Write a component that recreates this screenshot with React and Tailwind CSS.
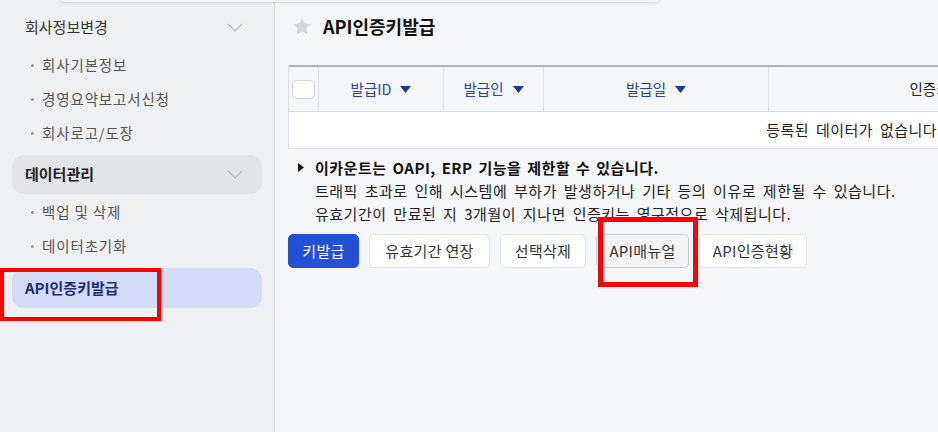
import React from "react";

const font = { fontFamily: '"Noto Sans CJK KR", "Noto Sans", sans-serif' };

function Chevron() {
  return (
    <svg width="16" height="9" viewBox="0 0 16 9" fill="none" className="shrink-0">
      <path d="M1 1l7 7 7-7" stroke="#b9bdc3" strokeWidth="1.2" />
    </svg>
  );
}

function SubItem({ children }) {
  return (
    <div className="flex h-[34px] items-center pl-[19px] text-[14.5px] tracking-[0.06em] text-[#555]">
      <span className="mr-[8px] h-[3px] w-[3px] rounded-full bg-[#999]" />
      <span>{children}</span>
    </div>
  );
}

function Tri() {
  return (
    <svg width="11" height="7" viewBox="0 0 11 7" className="ml-[9px] inline-block">
      <path d="M0 0h11L5.5 7z" fill="#1e3a8a" />
    </svg>
  );
}

function Btn({ children, className = "" }) {
  return (
    <button
      className={
        "flex h-[34px] items-center justify-center rounded-[5px] border px-[8px] text-[15px] tracking-[0.3px] " +
        className
      }
    >
      {children}
    </button>
  );
}

export default function App() {
  return (
    <div style={font} className="relative flex h-[432px] w-[938px] overflow-hidden bg-[#f5f6f8]">
      {/* top shadow */}
      <div className="absolute left-[60px] top-[-10px] z-10 h-[12px] w-[600px] rounded-b-[4px] bg-[#f3f4f6] shadow-[0_1px_3px_rgba(0,0,0,0.12)]" />

      {/* sidebar */}
      <aside className="relative flex w-[275px] shrink-0 flex-col border-r border-[#d9dadd] bg-[#eff0f2] px-[12px] pt-[8px]">
        <div className="flex h-[38px] items-center justify-between pl-[13px] pr-[19px] text-[15px] text-[#333]">
          <span>회사정보변경</span>
          <Chevron />
        </div>
        <div className="mt-[2px]">
          <SubItem>회사기본정보</SubItem>
          <SubItem>경영요약보고서신청</SubItem>
          <SubItem>회사로고/도장</SubItem>
        </div>
        <div className="mt-[5px] flex h-[39px] items-center justify-between rounded-[12px] bg-[#e2e4e7] pl-[13px] pr-[19px] text-[15px] font-bold text-[#222]">
          <span>데이터관리</span>
          <Chevron />
        </div>
        <div className="mt-[1px]">
          <SubItem>백업 및 삭제</SubItem>
          <SubItem>데이터초기화</SubItem>
        </div>
        <div className="mt-[5px] flex h-[40px] items-center rounded-[12px] bg-[#d3dbf6] pl-[13px] text-[15px] font-bold text-[#1e2f78]">
          API인증키발급
        </div>
        <div className="absolute left-0 top-[268px] h-[53px] w-[161px] border-[4px] border-[#ff0000]" />
      </aside>

      {/* main */}
      <main className="relative min-w-0 flex-1 pl-[13px]">
        <div className="flex h-[52px] items-center pl-[4px]">
          <svg width="20" height="19" viewBox="0 0 24 23" className="mr-[11px]">
            <path
              d="M12 1l3.1 7 7.6.7-5.7 5 1.7 7.4L12 17.2 5.3 21.1 7 13.7l-5.7-5L8.9 8z"
              fill="#d3d6db"
            />
          </svg>
          <span className="text-[18px] font-bold text-[#111]">API인증키발급</span>
        </div>

        <div className="mt-[13px] w-[1132px] border-x border-[#dcdfe3]">
          <div className="flex h-[47px] border-t-2 border-[#a6b4c4] border-b border-b-[#dcdfe3] text-[14.5px] text-[#2545a8]">
            <div className="flex w-[30px] items-center justify-center border-r border-[#dcdfe3]">
              <div className="h-[19px] w-[23px] rounded-[5px] border border-[#cfd3d9] bg-white" />
            </div>
            <div className="flex w-[125px] items-center justify-center border-r border-[#dcdfe3]">
              발급ID <Tri />
            </div>
            <div className="flex w-[100px] items-center justify-center border-r border-[#dcdfe3]">
              발급인 <Tri />
            </div>
            <div className="flex w-[225px] items-center justify-center border-r border-[#dcdfe3]">
              발급일 <Tri />
            </div>
            <div className="flex w-[342px] items-center justify-center border-r border-[#dcdfe3] text-[#222]">
              인증키 <Tri />
            </div>
            <div className="flex-1" />
          </div>
          <div className="flex h-[37px] items-center justify-center border-b border-[#dcdfe3] bg-white text-[15px] tracking-[0.5px] [word-spacing:3px] text-[#222]">
            등록된 데이터가 없습니다.
          </div>
        </div>

        <div className="mt-[7px] text-[15px] leading-[23px] tracking-[0.5px] [word-spacing:3px] text-[#222]">
          <div className="flex items-center">
            <svg width="6" height="9" viewBox="0 0 6 9" className="ml-[10px] mr-[11px]">
              <path d="M0 0l6 4.5L0 9z" fill="#111" />
            </svg>
            <span className="font-bold text-[#111] [word-spacing:2px]">이카운트는 OAPI, ERP 기능을 제한할 수 있습니다.</span>
          </div>
          <div className="pl-[27px]">
            트래픽 초과로 인해 시스템에 부하가 발생하거나 기타 등의 이유로 제한될 수 있습니다.
          </div>
          <div className="pl-[27px]">
            유효기간이 만료된 지 3개월이 지나면 인증키는 영구적으로 삭제됩니다.
          </div>
        </div>

        <div className="mt-[9px] flex gap-[10px]">
          <Btn className="w-[71px] border-[#2450d6] bg-[#2450d6] text-white">키발급</Btn>
          <Btn className="w-[121px] border-[#dfe2e6] bg-white text-[#333]">유효기간 연장</Btn>
          <Btn className="w-[86px] border-[#dfe2e6] bg-white text-[#333]">선택삭제</Btn>
          <Btn className="w-[93px] border-[#c9cdd3] bg-[#f3f4f6] text-[#333]">API매뉴얼</Btn>
          <Btn className="w-[108px] border-[#dfe2e6] bg-white text-[#333]">API인증현황</Btn>
        </div>

        <div className="absolute left-[323px] top-[217px] h-[70px] w-[100px] border-[5px] border-[#ff0000]" />
      </main>
    </div>
  );
}
